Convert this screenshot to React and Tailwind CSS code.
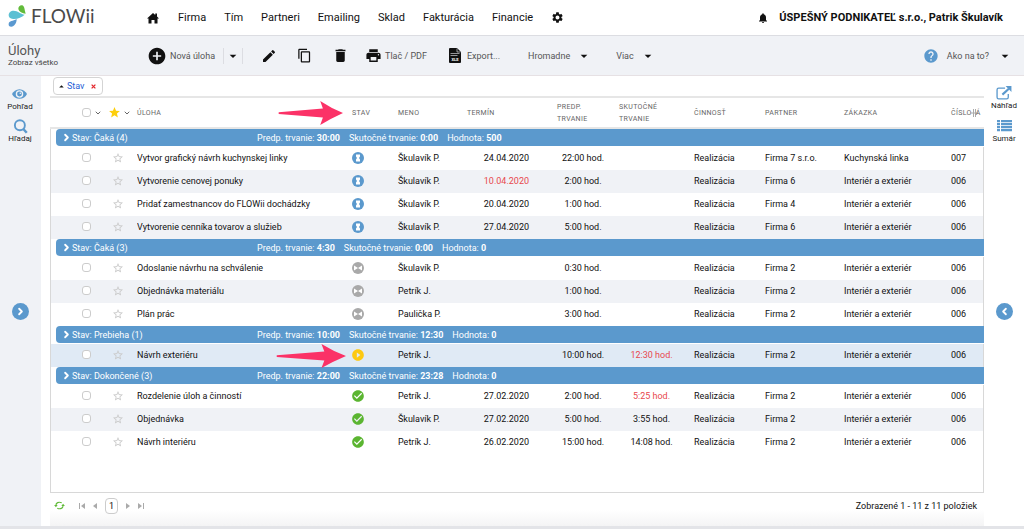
import React from 'react';
import {
    MdSettings, MdNotifications, MdAddCircle, MdEdit, MdContentCopy, MdDelete, MdPrint,
    MdArrowDropDown, MdArrowDropUp, MdHelp, MdStar, MdStarBorder, MdCheckCircle, MdPlayCircleFilled,
} from 'react-icons/md';
import { FiChevronDown, FiChevronLeft, FiChevronRight } from 'react-icons/fi';

const navItems = ['Firma', 'Tím', 'Partneri', 'Emailing', 'Sklad', 'Fakturácia', 'Financie'];

const groups = [
    {
        id: 'caka-4', title: 'Stav: Čaká (4)', planned: '30:00', real: '0:00', value: '500',
        tasks: [
            { name: 'Vytvor grafický návrh kuchynskej linky', status: 'waiting', person: 'Škulavík P.', date: '24.04.2020', planned: '22:00 hod.', partner: 'Firma 7 s.r.o.', order: 'Kuchynská linka', number: '007' },
            { name: 'Vytvorenie cenovej ponuky', status: 'waiting', person: 'Škulavík P.', date: '10.04.2020', late: true, planned: '2:00 hod.', partner: 'Firma 6', order: 'Interiér a exteriér', number: '006' },
            { name: 'Pridať zamestnancov do FLOWii dochádzky', status: 'waiting', person: 'Škulavík P.', date: '20.04.2020', planned: '1:00 hod.', partner: 'Firma 4', order: 'Interiér a exteriér', number: '006' },
            { name: 'Vytvorenie cenníka tovarov a služieb', status: 'waiting', person: 'Škulavík P.', date: '27.04.2020', planned: '5:00 hod.', partner: 'Firma 6', order: 'Interiér a exteriér', number: '006' },
        ],
    },
    {
        id: 'caka-3', title: 'Stav: Čaká (3)', planned: '4:30', real: '0:00', value: '0',
        tasks: [
            { name: 'Odoslanie návrhu na schválenie', status: 'blocked', person: 'Škulavík P.', planned: '0:30 hod.', partner: 'Firma 2', order: 'Interiér a exteriér', number: '006' },
            { name: 'Objednávka materiálu', status: 'blocked', person: 'Petrík J.', planned: '1:00 hod.', partner: 'Firma 2', order: 'Interiér a exteriér', number: '006' },
            { name: 'Plán prác', status: 'blocked', person: 'Paulička P.', planned: '3:00 hod.', partner: 'Firma 2', order: 'Interiér a exteriér', number: '006' },
        ],
    },
    {
        id: 'prebieha', title: 'Stav: Prebieha (1)', planned: '10:00', real: '12:30', value: '0',
        tasks: [
            { name: 'Návrh exteriéru', status: 'running', person: 'Petrík J.', planned: '10:00 hod.', real: '12:30 hod.', over: true, partner: 'Firma 2', order: 'Interiér a exteriér', number: '006', selected: true },
        ],
    },
    {
        id: 'dokoncene', title: 'Stav: Dokončené (3)', planned: '22:00', real: '23:28', value: '0',
        tasks: [
            { name: 'Rozdelenie úloh a činností', status: 'done', person: 'Petrík J.', date: '27.02.2020', planned: '2:00 hod.', real: '5:25 hod.', over: true, partner: 'Firma 2', order: 'Interiér a exteriér', number: '006' },
            { name: 'Objednávka', status: 'done', person: 'Škulavík P.', date: '27.02.2020', planned: '5:00 hod.', real: '3:55 hod.', partner: 'Firma 2', order: 'Interiér a exteriér', number: '006' },
            { name: 'Návrh interiéru', status: 'done', person: 'Petrík J.', date: '26.02.2020', planned: '15:00 hod.', real: '14:08 hod.', partner: 'Firma 2', order: 'Interiér a exteriér', number: '006' },
        ],
    },
];

const Logo = () => (
    <a href="#" className="flex items-center gap-[5px] text-[#4a4a4a]">
        <svg viewBox="0 0 52 66" className="h-[22px] w-[18px]">
            <path fill="#62bb3a" d="M52 26C43 25 31 20 30 11C30 4 36 0 41 1C49 2 48 14 52 26z" />
            <path fill="#5cc0d3" d="M49 29C40 37 28 43 14 42C5 41 1 37 1 31C1 23 7 17 16 17C28 17 36 27 49 29z" />
            <path fill="#5b99d0" d="M25 42C25 54 18 65 9 65C3 65 0 61 1 56C2 48 14 48 25 42z" />
        </svg>
        <span className="font-[Lato,sans-serif] text-[19px] leading-6">FLOWii</span>
    </a>
);

const HomeIcon = () => (
    <svg viewBox="0 0 24 24" className="h-3 w-3" fill="currentColor">
        <path d="M12 2L0 13h3v10h6v-7h6v7h6V13h3l-4-4V3h-3.500v3.200z" />
    </svg>
);

const ExportIcon = () => (
    <svg viewBox="0 0 12 15" className="h-[15px] w-3">
        <path fill="#111" d="M1 0h7l4 4v10a1 1 0 0 1-1 1H1a1 1 0 0 1-1-1V1a1 1 0 0 1 1-1z" />
        <path fill="none" stroke="#f0f2f6" strokeWidth=".6" d="M8 .5V4h3.500M1.500 5.500h9M1.500 7.500h7" />
        <text x="6" y="13" fill="#fff" fontSize="4" fontWeight="700" textAnchor="middle">XLS</text>
    </svg>
);

const EyeIcon = () => (
    <svg viewBox="0 0 28 18" className="h-[10px] w-[15px]">
        <path fill="#5b99cd" d="M14 0C7.500 0 2.500 4 0 9c2.500 5 7.500 9 14 9s11.500-4 14-9C25.500 4 20.500 0 14 0z" />
        <circle cx="14" cy="9" r="7" fill="#f0f2f6" />
        <circle cx="14" cy="9" r="4.500" fill="#5b99cd" />
        <circle cx="15.500" cy="7.500" r="1.500" fill="#f0f2f6" />
    </svg>
);

const SearchIcon = () => (
    <svg viewBox="0 0 24 24" className="h-[15px] w-[15px]" fill="none" stroke="#5b99cd" strokeWidth="3">
        <circle cx="11" cy="10" r="8" />
        <path d="M16.500 16l5.500 6" strokeWidth="4" />
    </svg>
);

const PreviewIcon = () => (
    <svg viewBox="0 0 30 26" className="h-[14px] w-4" fill="none" stroke="#5b99cd" strokeWidth="2.500">
        <path d="M17 4H5a3 3 0 0 0-3 3v14a3 3 0 0 0 3 3h15a3 3 0 0 0 3-3v-6" />
        <path d="M12 16L24 5" strokeWidth="4" />
        <path d="M18 0h11v11z" fill="#5b99cd" stroke="none" />
    </svg>
);

const SummaryIcon = () => (
    <svg viewBox="0 0 15 12" className="h-3 w-[15px]" fill="#5b99cd">
        <path d="M0 0h3v2.300H0zM4 0h11v2.300H4zM0 3h3v2.300H0zM4 3h11v2.300H4zM0 6h3v2.300H0zM4 6h11v2.300H4zM0 9h3v2.300H0zM4 9h11v2.300H4z" />
    </svg>
);

const RefreshIcon = () => (
    <svg viewBox="0 0 24 20" className="h-[9px] w-[11px]" fill="none" stroke="#62bb3a" strokeWidth="2.500">
        <path d="M4 10C4 4 10 1 17 4M20 10c0 6-6 9-13 6" />
        <path d="M0 9h8l-4 5zM16 11h8l-4-5z" fill="#62bb3a" stroke="none" />
    </svg>
);

const PointerArrow = ({ className }) => (
    <svg viewBox="0 0 194 70" preserveAspectRatio="none" className={`absolute top-1/2 right-full z-10 -translate-y-1/2 ${className}`} fill="#fb3267">
        <path d="M2 33L134 22L126 0Q160 22 194 35Q160 50 126 70L134 48L2 38z" />
    </svg>
);

const StatusIcon = ({ status }) => {
    if (status === 'done') return <MdCheckCircle size={14} className="-ml-px text-[#5bb531]" />;
    if (status === 'running') return <MdPlayCircleFilled size={14} className="-ml-px text-[#fdc912]" />;
    if (status === 'blocked') {
        return (
            <svg viewBox="0 0 24 24" className="h-3 w-3">
                <circle cx="12" cy="12" r="12" fill="#a9a9a9" />
                <path fill="#fff" d="M4 7l8 5-8 5zM20 7l-8 5 8 5z" />
            </svg>
        );
    }
    return (
        <svg viewBox="0 0 24 24" className="h-3 w-3">
            <circle cx="12" cy="12" r="12" fill="#5b99cd" />
            <path fill="#fff" d="M8 5h8v4l-2 3 2 3v4H8v-4l2-3-2-3z" />
        </svg>
    );
};

const Checkbox = ({ label }) => (
    <input
        type="checkbox"
        aria-label={label}
        className="block h-[9px] w-[9px] appearance-none rounded-[3px] border border-[#ccc] bg-white"
    />
);

const SideButton = ({ icon, label }) => (
    <button className="flex flex-col items-center text-[8px] leading-[9px] text-[#222]">
        <span className="flex h-4 items-center">{icon}</span>
        {label}
    </button>
);

const TaskRow = ({ task, striped }) => {
    const bg = task.selected ? 'bg-[#e0eaf5]' : striped ? 'bg-[#f0f2f6]' : 'bg-white';

    return (
        <tr className={`h-[23px] *:pb-[2px] ${bg}`}>
            <td className="border-l border-[#d8d8d8] pl-[31px]"><Checkbox label={task.name} /></td>
            <td className="pl-[7px]">
                <button aria-label="Obľúbené" className="block text-[#c9c9c9]"><MdStarBorder size={12} /></button>
            </td>
            <td className="truncate">{task.name}</td>
            <td className="relative">
                <StatusIcon status={task.status} />
                {task.selected && <PointerArrow className="mr-[6px] h-6 w-[70px]" />}
            </td>
            <td>{task.person}</td>
            <td className={`pr-7 text-right ${task.late ? 'text-[#e8484d]' : ''}`}>{task.date}</td>
            <td className="pr-[10px] text-center">{task.planned}</td>
            <td className={`pr-[10px] text-center ${task.over ? 'text-[#e8484d]' : ''}`}>{task.real}</td>
            <td>Realizácia</td>
            <td>{task.partner}</td>
            <td>{task.order}</td>
            <td className="border-r border-[#d8d8d8]">{task.number}</td>
        </tr>
    );
};

const App = () => {
    return (
        <div className="flex min-h-screen flex-col bg-white font-[Roboto,sans-serif] text-[9px] leading-3 text-[#111]">
            {/* Top navigation */}
            <header className="flex h-9 items-center border-b border-[#dcdde2] pr-[21px] pl-2">
                <div className="w-[139px] pb-1"><Logo /></div>
                <nav className="flex items-center gap-[18px] text-[11px] leading-4">
                    <a href="#" aria-label="Domov" className="mr-px"><HomeIcon /></a>
                    {navItems.map((item) => <a key={item} href="#">{item}</a>)}
                    <a href="#" aria-label="Nastavenia"><MdSettings size={13} /></a>
                </nav>
                <div className="ml-auto flex items-center gap-[10px]">
                    <button aria-label="Upozornenia"><MdNotifications size={12} /></button>
                    <span className="text-[11px] leading-4 font-bold">ÚSPEŠNÝ PODNIKATEĽ s.r.o., Patrik Škulavík</span>
                </div>
            </header>

            {/* Toolbar */}
            <div className="flex h-10 items-center border-b border-[#e6e1e4] bg-[#f0f2f6] pr-[11px] pl-2 text-[#555]">
                <div className="w-[139px]">
                    <h1 className="text-[13px] leading-[14px]">Úlohy</h1>
                    <p className="text-[8px] leading-[10px] text-[#444]">Zobraz všetko</p>
                </div>
                <button className="flex items-center gap-[3px]">
                    <MdAddCircle size={20} className="text-[#111]" />
                    Nová úloha
                </button>
                <button aria-label="Ďalšie možnosti" className="ml-2 flex h-4 items-center border-x border-[#dcdde2] px-px text-[#111]">
                    <MdArrowDropDown size={16} />
                </button>
                <div className="ml-[18px] flex items-center gap-5 text-[#111]">
                    <button aria-label="Upraviť"><MdEdit size={16} /></button>
                    <button aria-label="Kopírovať"><MdContentCopy size={15} /></button>
                    <button aria-label="Vymazať"><MdDelete size={17} /></button>
                </div>
                <button className="ml-4 flex items-center gap-[3px]">
                    <MdPrint size={17} className="text-[#111]" />
                    Tlač / PDF
                </button>
                <button className="ml-[22px] flex items-center gap-[6px]">
                    <ExportIcon />
                    Export...
                </button>
                <button className="ml-7 flex items-center gap-[6px]">
                    Hromadne
                    <MdArrowDropDown size={16} className="text-[#111]" />
                </button>
                <button className="ml-6 flex items-center gap-[6px]">
                    Viac
                    <MdArrowDropDown size={16} className="text-[#111]" />
                </button>
                <button className="ml-auto flex items-center gap-2">
                    <MdHelp size={16} className="text-[#5b99cd]" />
                    Ako na to?
                    <MdArrowDropDown size={16} className="text-[#111]" />
                </button>
            </div>

            <div className="flex flex-1">
                {/* Left panel */}
                <aside className="flex w-[41px] flex-col items-center bg-[#f0f2f6] pt-[10px] pr-px">
                    <SideButton icon={<EyeIcon />} label="Pohľad" />
                    <div className="mt-[7px]"><SideButton icon={<SearchIcon />} label="Hľadaj" /></div>
                    <button aria-label="Rozbaliť" className="mt-40 flex h-[17px] w-[17px] items-center justify-center rounded-full bg-[#5b99cd] text-white">
                        <FiChevronRight size={11} strokeWidth={4} />
                    </button>
                </aside>

                <main className="flex min-w-0 flex-1 flex-col pl-[9px]">
                    {/* Active grouping */}
                    <div className="flex h-[22px] items-center border-b-2 border-[#e6e6e6] pl-[3px]">
                        <div className="flex h-[18px] items-center rounded border border-[#d4d4d4] pr-[6px] pl-[2px]">
                            <MdArrowDropUp size={11} />
                            <a href="#" className="text-[#1f5fd6]">Stav</a>
                            <button aria-label="Zrušiť" className="ml-[7px] text-[#e3262b]">
                                <svg viewBox="0 0 8 8" className="h-[5px] w-[5px]" stroke="currentColor" strokeWidth="2">
                                    <path d="M1 1l6 6M7 1L1 7" />
                                </svg>
                            </button>
                        </div>
                    </div>

                    <table className="w-full table-fixed border-separate border-spacing-0 whitespace-nowrap">
                        <colgroup>
                            <col className="w-[55px]" />
                            <col className="w-8" />
                            <col />
                            <col className="w-[46px]" />
                            <col className="w-[69px]" />
                            <col className="w-[90px]" />
                            <col className="w-[62px]" />
                            <col className="w-[75px]" />
                            <col className="w-[71px]" />
                            <col className="w-[79px]" />
                            <col className="w-[107px]" />
                            <col className="w-[33px]" />
                        </colgroup>
                        <thead>
                            <tr className="h-[31px] text-left text-[7px] tracking-wider text-[#666] *:border-b-2 *:border-[#e6e6e6] *:font-normal">
                                <th className="pl-8">
                                    <div className="flex items-center gap-[3px]">
                                        <Checkbox label="Vybrať všetko" />
                                        <button aria-label="Možnosti výberu"><FiChevronDown size={8} strokeWidth={3} /></button>
                                    </div>
                                </th>
                                <th className="pl-[3px]">
                                    <div className="flex items-center gap-[2px]">
                                        <MdStar size={13} className="text-[#fdcf0c]" />
                                        <button aria-label="Filter obľúbených"><FiChevronDown size={8} strokeWidth={3} /></button>
                                    </div>
                                </th>
                                <th>ÚLOHA</th>
                                <th className="relative">
                                    STAV
                                    <PointerArrow className="mr-[9px] h-6 w-[65px]" />
                                </th>
                                <th>MENO</th>
                                <th>TERMÍN</th>
                                <th>PREDP.<br />TRVANIE</th>
                                <th>SKUTOČNÉ<br />TRVANIE</th>
                                <th>ČINNOSŤ</th>
                                <th>PARTNER</th>
                                <th>ZÁKAZKA</th>
                                <th>
                                    <div className="flex items-center">
                                        ČÍSLO
                                        <svg viewBox="0 0 8 8" className="-mx-[2px] h-2 w-2 shrink-0" stroke="#aaa">
                                            <path d="M0 4h8M3.500 0v8M5.500 0v8" />
                                        </svg>
                                        Á
                                    </div>
                                </th>
                            </tr>
                        </thead>
                        {groups.map((group) => (
                            <tbody key={group.id}>
                                <tr className="h-[18px]">
                                    <td colSpan={12} className="border-l border-[#d8d8d8] pb-px pl-[5px]">
                                        <div className="flex h-[17px] items-center gap-[9px] rounded-l-sm bg-[#5b99cd] pl-[5px] text-white">
                                            <button className="flex w-[187px] items-center">
                                                <FiChevronRight size={11} strokeWidth={4} />
                                                {group.title}
                                            </button>
                                            <span>Predp. trvanie: <b>{group.planned}</b></span>
                                            <span>Skutočné trvanie: <b>{group.real}</b></span>
                                            <span>Hodnota: <b>{group.value}</b></span>
                                        </div>
                                    </td>
                                </tr>
                                {group.tasks.map((task, i) => (
                                    <TaskRow key={task.name} task={task} striped={i % 2 === 1} />
                                ))}
                            </tbody>
                        ))}
                    </table>
                    <div className="flex-1 border border-t-0 border-[#d8d8d8]" />

                    {/* Pager */}
                    <footer className="flex h-[33px] items-center bg-linear-to-b from-white from-50% to-[#f4f4f5] pr-[7px] pb-2 pl-1 text-[#aaa]">
                        <button aria-label="Obnoviť"><RefreshIcon /></button>
                        <button aria-label="Prvá strana" className="ml-[14px]">
                            <svg viewBox="0 0 6 6" className="h-[6px] w-[6px]" fill="currentColor"><path d="M0 0h1v6H0zM6 0v6L2 3z" /></svg>
                        </button>
                        <button aria-label="Predchádzajúca strana" className="ml-2">
                            <svg viewBox="0 0 4 6" className="h-[6px] w-1" fill="currentColor"><path d="M4 0v6L0 3z" /></svg>
                        </button>
                        <button className="mx-2 flex h-4 w-[13px] items-center justify-center rounded border border-[#ccc] text-[#111]">1</button>
                        <button aria-label="Ďalšia strana">
                            <svg viewBox="0 0 4 6" className="h-[6px] w-1" fill="currentColor"><path d="M0 0v6l4-3z" /></svg>
                        </button>
                        <button aria-label="Posledná strana" className="ml-2">
                            <svg viewBox="0 0 6 6" className="h-[6px] w-[6px]" fill="currentColor"><path d="M5 0h1v6H5zM0 0v6l4-3z" /></svg>
                        </button>
                        <span className="ml-auto text-[#111]">Zobrazené 1 - 11 z 11 položiek</span>
                    </footer>
                </main>

                {/* Right panel */}
                <aside className="flex w-10 flex-col items-center pt-[9px]">
                    <SideButton icon={<PreviewIcon />} label="Náhľad" />
                    <div className="mt-2"><SideButton icon={<SummaryIcon />} label="Sumár" /></div>
                    <button aria-label="Rozbaliť náhľad" className="mt-40 flex h-[17px] w-[17px] items-center justify-center rounded-full bg-[#5b99cd] text-white">
                        <FiChevronLeft size={11} strokeWidth={4} />
                    </button>
                </aside>
            </div>
            <div className="h-[3px] bg-[#e3e4e8]" />
        </div>
    );
};

export default App;
